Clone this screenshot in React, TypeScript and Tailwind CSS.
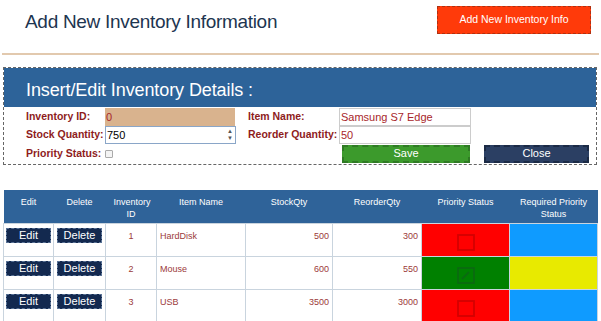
import React from "react";

const rows = [
  { id: 1, name: "HardDisk", stock: 500, reorder: 300, pri: false },
  { id: 2, name: "Mouse", stock: 600, reorder: 550, pri: true },
  { id: 3, name: "USB", stock: 3500, reorder: 3000, pri: false },
];

function Box({ checked, color }: { checked: boolean; color: string }) {
  return (
    <svg width="18" height="17" viewBox="0 0 18 17" className="mx-auto mt-[10px]">
      <rect x="1" y="1" width="16" height="15" fill="none" stroke={color} strokeWidth="1.8" />
      {checked && <path d="M5 12 L12 5" stroke={color} strokeWidth="1.8" />}
    </svg>
  );
}

export default function App() {
  return (
    <div className="w-[601px] h-[321px] bg-white overflow-hidden font-['Liberation_Sans',Arial,sans-serif]">
      <div className="h-[53px] flex justify-between items-start pl-[25px] pr-[10px]">
        <div className="mt-[10px] text-[19px] leading-[24px] tracking-[-0.3px] text-[#1d3550]">Add New Inventory Information</div>
        <div className="mt-[6px] w-[154px] h-[28px] bg-[#ff3a0a] border border-dashed border-[#b03010] flex items-center justify-center text-white text-[10.5px]">
          Add New Inventory Info
        </div>
      </div>
      <div className="h-[2px] bg-[#e2c9ae] mx-[2px]" />
      <div className="mt-[12px] ml-[3px] w-[594px] border border-dashed border-[#666]">
        <div className="h-[39px] bg-[#2d6399] pl-[22px] flex items-center">
          <span className="text-white text-[18px] tracking-[-0.1px] mt-[5px]">Insert/Edit Inventory Details :</span>
        </div>
        <div className="pl-[22px] pt-[1px] pb-[1px] text-[10.5px] font-bold text-[#8e1c1c] whitespace-nowrap">
          <div className="flex h-[18px] items-center">
            <div className="w-[79px]">Inventory ID:</div>
            <div className="w-[130px] h-[18px] bg-[#d9b38e] pl-[1px] font-normal text-[11px] text-[#a8262a] leading-[18px]">0</div>
            <div className="w-[91px] ml-[13px]">Item Name:</div>
            <div className="w-[132px] h-[18px] border border-[#ccc] pl-[1px] font-normal text-[11px] text-[#a8262a] leading-[16px]">Samsung S7 Edge</div>
          </div>
          <div className="flex h-[18px] items-center">
            <div className="w-[79px]">Stock Quantity:</div>
            <div className="w-[131px] h-[18px] border border-[#8aa6c8] pl-[1px] font-normal text-[11px] text-black leading-[16px] flex justify-between">
              <span>750</span>
              <span className="text-[6px] leading-[7px] text-[#555] pr-[2px] flex flex-col justify-center">
                <span>▲</span>
                <span>▼</span>
              </span>
            </div>
            <div className="w-[91px] ml-[12px]">Reorder Quantity:</div>
            <div className="w-[132px] h-[18px] border border-[#ccc] pl-[1px] font-normal text-[11px] text-[#a8262a] leading-[16px]">50</div>
          </div>
          <div className="flex h-[19px] items-center">
            <div className="w-[79px]">Priority Status:</div>
            <div className="w-[8px] h-[8px] border border-[#aaa] bg-[#f4f4f4] rounded-[1px]" />
            <div className="ml-[229px] w-[128px] h-[18px] bg-[#3c9a2c] border-2 border-dashed border-[#2f7a24] text-white font-normal text-[11px] flex items-center justify-center">Save</div>
            <div className="ml-[14px] w-[105px] h-[18px] bg-[#2b3f63] border-2 border-dashed border-[#1b2a45] text-white font-normal text-[11px] flex items-center justify-center">Close</div>
          </div>
        </div>
      </div>
      <table className="mt-[25px] ml-[3px] w-[594px] border-collapse table-fixed text-[9px]">
        <colgroup>
          <col className="w-[50px]" />
          <col className="w-[52px]" />
          <col className="w-[51px]" />
          <col className="w-[89px]" />
          <col className="w-[87px]" />
          <col className="w-[89px]" />
          <col className="w-[88px]" />
          <col className="w-[88px]" />
        </colgroup>
        <thead>
          <tr className="h-[33px] bg-[#2f6399] text-white align-top">
            {["Edit", "Delete", "Inventory ID", "Item Name", "StockQty", "ReorderQty", "Priority Status", "Required Priority Status"].map((h, i) => (
              <th key={h} className={`font-normal leading-[12px] pt-[6px] ${i === 2 ? "px-[8px]" : i === 7 ? "px-[10px]" : "px-[2px]"}`}>
                {h}
              </th>
            ))}
          </tr>
        </thead>
        <tbody>
          {rows.map((r) => (
            <tr key={r.id} className="h-[33px] align-top text-[#9b3a3a]">
              <td className="border border-[#c9d4de] px-[2px] pt-[4px]">
                <div className="h-[15px] bg-[#13294f] border border-dashed border-[#5a7396] text-white text-[11px] flex items-center justify-center">Edit</div>
              </td>
              <td className="border border-[#c9d4de] px-[3px] pt-[4px]">
                <div className="h-[15px] bg-[#13294f] border border-dashed border-[#5a7396] text-white text-[11px] flex items-center justify-center">Delete</div>
              </td>
              <td className="border border-[#c9d4de] text-center pt-[6px]">{r.id}</td>
              <td className="border border-[#c9d4de] pl-[3px] pt-[6px]">{r.name}</td>
              <td className="border border-[#c9d4de] text-right pr-[3px] pt-[6px]">{r.stock}</td>
              <td className="border border-[#c9d4de] text-right pr-[3px] pt-[6px]">{r.reorder}</td>
              <td className={`border border-[#c9d4de] ${r.pri ? "bg-[#008000]" : "bg-[#ff0000]"}`}>
                <Box checked={r.pri} color={r.pri ? "#0a6a10" : "#d40000"} />
              </td>
              <td className={`border border-[#c9d4de] ${r.pri ? "bg-[#e8ea00]" : "bg-[#0f9bff]"}`} />
            </tr>
          ))}
        </tbody>
      </table>
    </div>
  );
}
